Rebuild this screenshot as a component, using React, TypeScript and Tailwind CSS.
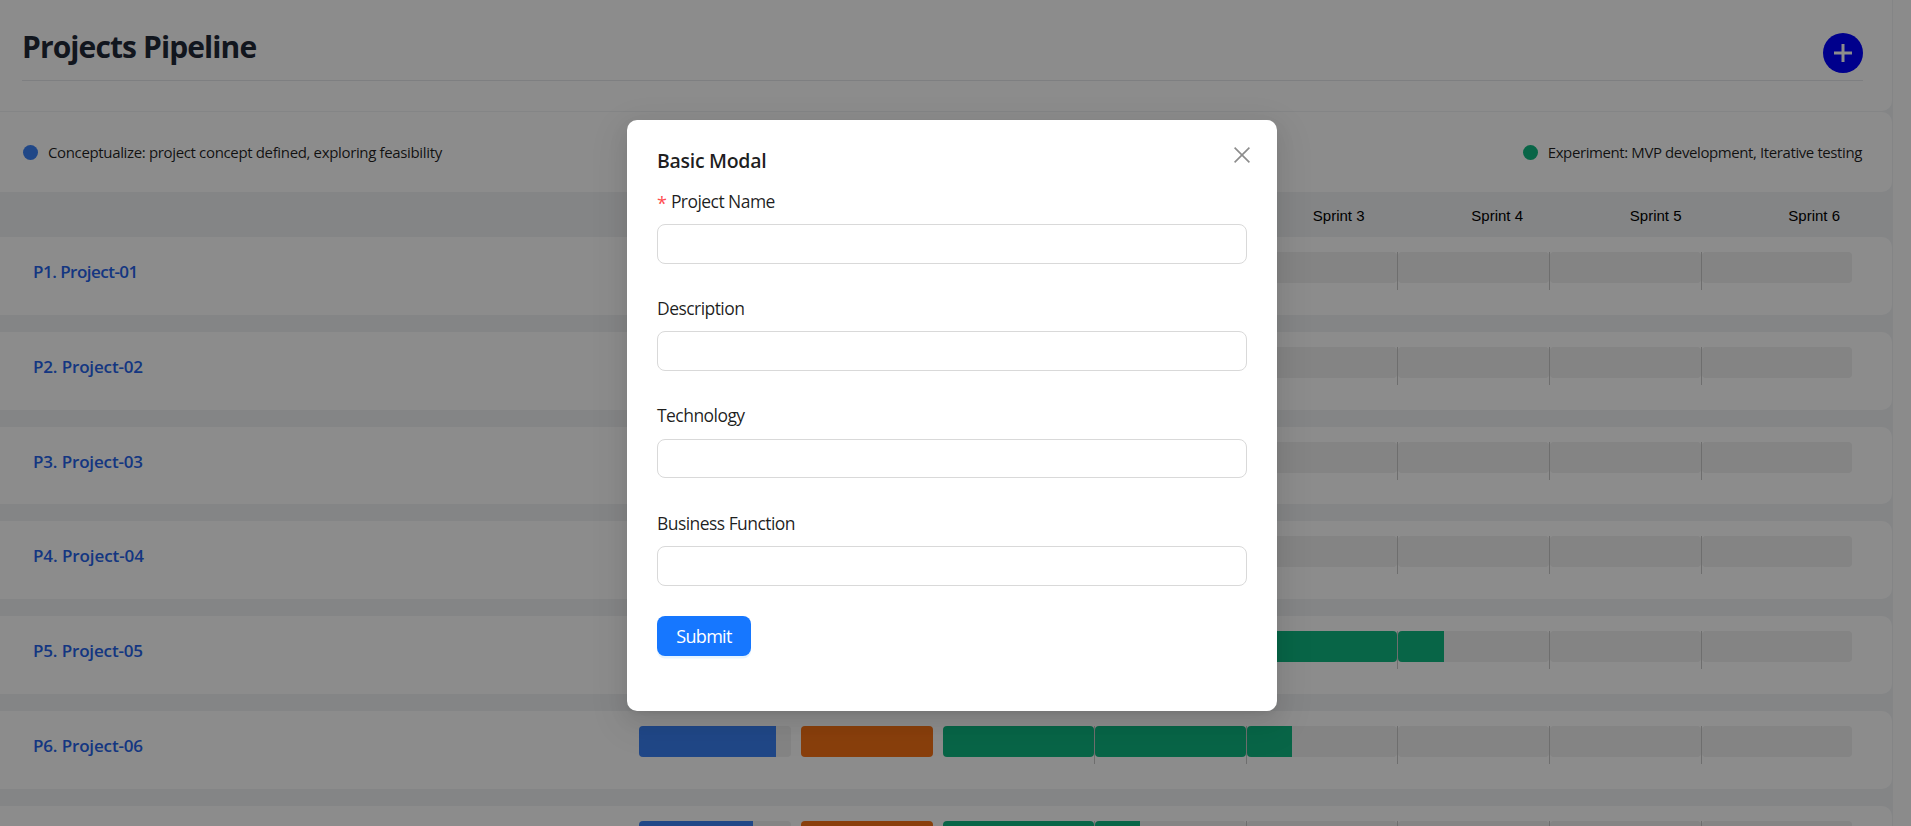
import React from "react";

type Row = { name: string; tracking: string; concept: number; pilot: number; sprints: number[] };

const rows: Row[] = [
  { name: "P1. Project-01", tracking: "tracking-[-0.52px]", concept: 50, pilot: 0, sprints: [0, 0, 0, 0, 0, 0] },
  { name: "P2. Project-02", tracking: "tracking-[-0.15px]", concept: 50, pilot: 0, sprints: [0, 0, 0, 0, 0, 0] },
  { name: "P3. Project-03", tracking: "tracking-[-0.15px]", concept: 50, pilot: 0, sprints: [0, 0, 0, 0, 0, 0] },
  { name: "P4. Project-04", tracking: "tracking-[-0.08px]", concept: 50, pilot: 0, sprints: [0, 0, 0, 0, 0, 0] },
  { name: "P5. Project-05", tracking: "tracking-[-0.15px]", concept: 100, pilot: 100, sprints: [100, 100, 100, 30, 0, 0] },
  { name: "P6. Project-06", tracking: "tracking-[-0.15px]", concept: 90, pilot: 100, sprints: [100, 100, 30, 0, 0, 0] },
  { name: "", tracking: "", concept: 75, pilot: 100, sprints: [100, 30, 0, 0, 0, 0] },
];

function Bar({ value, fill, className }: { value: number; fill: string; className: string }) {
  return (
    <div className={`h-[31px] shrink-0 overflow-hidden rounded bg-[#f0f0f0] ${className}`}>
      <div className={`h-full ${fill}`} style={{ width: `${value}%` }} />
    </div>
  );
}

function ProjectRow({ name, tracking, concept, pilot, sprints }: Row) {
  return (
    <div className="mb-[17px] flex h-[77.8px] shrink-0 rounded-r-[10px] bg-white pt-[15px]">
      <div
        className={`w-[639px] shrink-0 pl-[33px] pt-2 text-[17px] font-semibold leading-6 text-[#2563eb] ${tracking}`}
      >
        {name}
      </div>
      <Bar value={concept} fill="bg-[#3b82f6]" className="mr-[10px] w-[152px]" />
      <Bar value={pilot} fill="bg-[#f97316]" className="mr-[10px] w-[132px]" />
      {sprints.map((value, i) => (
        <div
          key={i}
          className={`h-[38px] shrink-0 ${i < 5 ? "w-[151.8px] border-r border-[#c8c8c8]" : "w-[150px]"}`}
        >
          <Bar value={value} fill="bg-[#10b981]" className="w-full" />
        </div>
      ))}
    </div>
  );
}

function Field({ label, required }: { label: string; required?: boolean }) {
  return (
    <div className="h-[107.4px]">
      <div className="flex h-8 items-center pt-[1.5px] text-[17.5px] tracking-[-0.55px]">
        {required && (
          <span className="mr-[4.5px] pt-1 text-[18px] leading-none text-[#ff4d4f]">*</span>
        )}
        {label}
      </div>
      <input className="mt-2 block h-[39.6px] w-full rounded-lg border border-[#d9d9d9] bg-white outline-none" />
    </div>
  );
}

export default function App() {
  return (
    <div className="relative h-[826px] w-full overflow-hidden bg-[#fefefe] font-['Open_Sans',sans-serif] text-black/88">
      <div className="flex h-[826px] w-[1893px] flex-col overflow-hidden bg-[#f0f2f5] pr-px">
        <header className="h-[111px] shrink-0 rounded-br-[10px] bg-white px-[22px]">
          <div className="mr-[7px] flex h-[81px] items-start justify-between border-b border-[#e5e7eb] pt-[29px]">
            <h1 className="text-[30px] font-bold leading-9 tracking-[-0.9px] text-[#1f2937]">
              Projects Pipeline
            </h1>
            <button className="mt-1 flex size-10 items-center justify-center rounded-full bg-[#0000ff]">
              <svg viewBox="0 0 18 18" className="size-[18px]" fill="#fff">
                <path d="M7.5 0h3v7.5H18v3h-7.5V18h-3v-7.5H0v-3h7.5z" />
              </svg>
            </button>
          </div>
        </header>
        <section className="mt-px flex h-20 shrink-0 items-center justify-between rounded-r-[10px] bg-white pl-[23px] pr-[30px] text-[15px]">
          <div className="flex items-center gap-[10px] tracking-[-0.35px]">
            <span className="size-[15px] rounded-full bg-[#3b82f6]" />
            Conceptualize: project concept defined, exploring feasibility
          </div>
          <div className="flex items-center gap-[10px] tracking-[-0.4px]">
            <span className="size-[15px] rounded-full bg-[#10b981]" />
            Experiment: MVP development, Iterative testing
          </div>
        </section>
        <div className="flex h-[45px] shrink-0 items-center justify-end pr-[52px] pt-[3px] font-['Liberation_Sans',sans-serif] text-[15px] text-black">
          {[3, 4, 5, 6].map((n) => (
            <span key={n} className="w-[158.5px] text-right">
              Sprint {n}
            </span>
          ))}
        </div>
        {rows.map((row, i) => (
          <ProjectRow key={i} {...row} />
        ))}
      </div>

      <div className="absolute inset-0 flex items-start justify-center bg-black/45 pr-[7px] pt-[120px]">
        <div className="relative h-[591px] w-[650px] rounded-[10px] bg-white px-[30px] pt-[25px] shadow-[0_7.5px_20px_0_rgba(0,0,0,0.08),0_3.75px_7.5px_-5px_rgba(0,0,0,0.12),0_11px_35px_10px_rgba(0,0,0,0.05)]">
          <h2 className="h-[39px] pt-px text-[19.5px] font-semibold leading-[30px] tracking-[-0.3px]">
            Basic Modal
          </h2>
          <Field label="Project Name" required />
          <Field label="Description" />
          <Field label="Technology" />
          <Field label="Business Function" />
          <button className="mt-[2.4px] flex h-10 w-[94px] items-center justify-center rounded-lg bg-[#1677ff] pt-0.5 text-[18px] tracking-[-0.7px] text-white shadow-[0_2.5px_0_rgba(5,145,255,0.1)]">
            Submit
          </button>
          <svg
            viewBox="0 0 16 16"
            className="absolute right-[27px] top-[27px] size-4"
            stroke="#8c8c8c"
            strokeWidth="1.6"
          >
            <path d="M.6.6l14.8 14.8M15.4.6L.6 15.4" />
          </svg>
        </div>
      </div>
    </div>
  );
}
